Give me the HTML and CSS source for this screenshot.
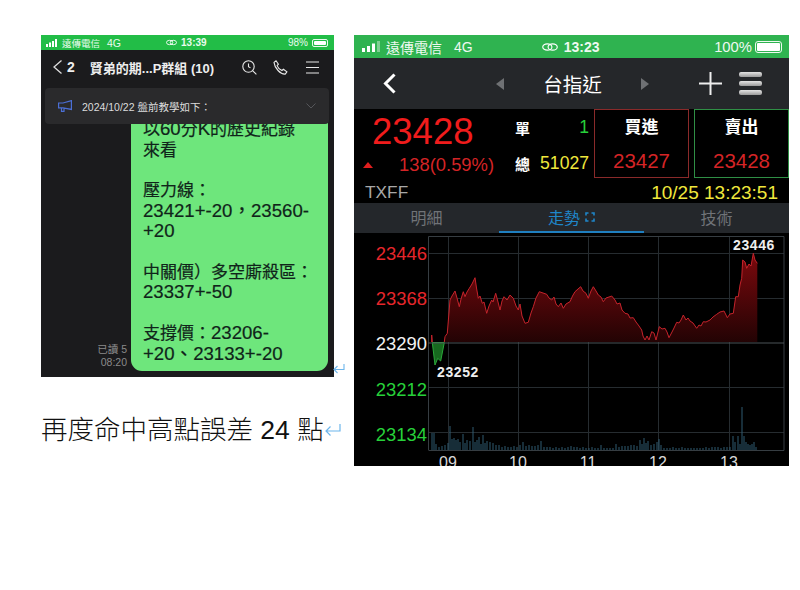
FILE: index.html
```html
<!DOCTYPE html>
<html lang="zh-Hant">
<head>
  <meta charset="UTF-8">
  <meta name="viewport" content="width=device-width, initial-scale=1.0">
  <title>再度命中高點</title>
  <link rel="stylesheet" href="styles.css">
</head>
<body>
  <div class="left-col">
    <div class="shot-row">
      <div class="chat">
        <div class="chat-status">
          <svg class="chat-signal" width="13" height="8" viewBox="0 0 13 8"><path fill="#fff" d="M0 5h2v3H0zM3 3.5h2V8H3zM6 2h2v6H6zM9 0h2v8H9z"/></svg>
          <span class="chat-carrier">遠傳電信</span>
          <span class="chat-net">4G</span>
          <svg class="chat-link" width="11" height="7" viewBox="0 0 15 9"><g fill="none" stroke="#fff" stroke-width="1.2"><ellipse cx="5" cy="4.5" rx="4.3" ry="3"/><ellipse cx="10" cy="4.5" rx="4.3" ry="3"/></g></svg>
          <span class="chat-time">13:39</span>
          <span class="chat-pct">98%</span>
          <span class="chat-batt"><span class="chat-batt-fill"></span></span>
        </div>
        <div class="chat-nav">
          <svg class="chat-back" width="9" height="14" viewBox="0 0 9 14"><path fill="none" stroke="#ddd" stroke-width="1.3" d="M8.5.5 1 7l7.5 6.5"/></svg>
          <span class="chat-count">2</span>
          <span class="chat-title">賢弟的期...P群組 (10)</span>
          <svg class="chat-ico-search" width="15" height="15" viewBox="0 0 15 15"><g fill="none" stroke="#e8e8e8" stroke-width="1.1"><circle cx="6.5" cy="6.5" r="5.7"/><path d="m10.8 10.8 3.6 3.6M6.5 3.5v3.2l2 1.2"/></g></svg>
          <svg class="chat-ico-phone" width="15" height="15" viewBox="0 0 15 15"><path fill="none" stroke="#e8e8e8" stroke-width="1.1" d="M1 2.4 3 .8l2.4 3.4-1.3 1.4c.7 2 2.6 4 4.8 4.9l1.5-1.2 3.5 2.6-1.7 2.2C7.500 14.500 1.500 8 1 2.400z"/></svg>
          <svg class="chat-ico-menu" width="13" height="13" viewBox="0 0 13 13"><path stroke="#e8e8e8" stroke-width="1.1" d="M0 1h13M0 6.500h13M0 12h13"/></svg>
        </div>
        <div class="chat-body">
          <div class="banner">
            <svg class="banner-ico" width="14" height="12" viewBox="0 0 14 12"><path fill="none" stroke="#4b6fd6" stroke-width="1.2" d="M13.400.6v8.800L5 7.800H.6V3H5zM3.500 8v3.400h2.500V8.200"/></svg>
            <span class="banner-text">2024/10/22 盤前教學如下：</span>
            <svg class="banner-arrow" width="10" height="6" viewBox="0 0 10 6"><path fill="none" stroke="#55565a" d="m.5.5 4.500 4.500L9.500.5"/></svg>
          </div>
          <div class="read">已讀 5<br>08:20</div>
          <div class="bubble"><span class="zh">以</span>60<span class="zh">分</span>K<span class="zh">的歷史紀錄</span><br><span class="zh">來看</span><br><br><span class="zh">壓力線：</span><br>23421+-20，23560-<br>+20<br><br><span class="zh">中關價）多空廝殺區：</span><br>23337+-50<br><br><span class="zh">支撐價：</span>23206-<br>+20、23133+-20</div>
        </div>
      </div>
      <svg class="para-mark" width="12" height="10" viewBox="0 0 12 10"><path fill="none" stroke="#6db6ec" stroke-width="1.1" d="M11 0v5.500H1M4.500 2 1 5.500 4.500 9"/></svg>
    </div>
    <p class="caption">再度命中高點誤差 24 點<svg class="caption-mark" width="16" height="14" viewBox="0 0 16 14"><path fill="none" stroke="#6db6ec" stroke-width="1.2" d="M15 1v7H1M5.500 3.500 1 8l4.500 4.500"/></svg></p>
  </div>

  <div class="quote">
    <div class="status">
      <svg class="signal" width="18" height="11" viewBox="0 0 18 11"><path fill="#fff" d="M0 7h3v4H0zM5 5h3v6H5zM10 2.500h3V11h-3z"/><path fill="#7fcf92" d="M15 0h3v11h-3z"/></svg>
      <span class="carrier">遠傳電信</span>
      <span class="net">4G</span>
      <svg class="link" width="16" height="10" viewBox="0 0 15 9"><g fill="none" stroke="#fff" stroke-width="1.100"><ellipse cx="5" cy="4.500" rx="4.300" ry="3"/><ellipse cx="10" cy="4.500" rx="4.300" ry="3"/></g></svg>
      <span class="time">13:23</span>
      <span class="pct">100%</span>
      <span class="batt"><span class="batt-fill"></span></span>
    </div>
    <div class="nav">
      <svg class="back" width="13" height="21" viewBox="0 0 13 21"><path fill="none" stroke="#fff" stroke-width="3" d="M11.500 1.500 2.500 10.500l9 9"/></svg>
      <div class="nav-center">
        <span class="tri tri-left"></span>
        <span class="nav-title">台指近</span>
        <span class="tri tri-right"></span>
      </div>
      <svg class="plus" width="23" height="23" viewBox="0 0 23 23"><path stroke="#eee" stroke-width="2" d="M0 11.500h23M11.500 0v23"/></svg>
      <div class="menu"><span></span><span></span><span></span></div>
    </div>
    <div class="prices">
      <div class="last">
        <div class="last-num">23428</div>
        <div class="last-chg"><span class="up"></span><span>138(0.59%)</span></div>
      </div>
      <div class="vol">
        <div class="vol-row"><b>單</b><span class="green">1</span></div>
        <div class="vol-row"><b>總</b><span class="yellow">51027</span></div>
      </div>
      <div class="box box-buy"><b>買進</b><span>23427</span></div>
      <div class="box box-sell"><b>賣出</b><span>23428</span></div>
    </div>
    <div class="code-row"><span class="code">TXFF</span><span class="stamp">10/25 13:23:51</span></div>
    <div class="tabs">
      <div class="tab">明細</div>
      <div class="tab tab-on">走勢
        <svg width="10" height="10" viewBox="0 0 10 10"><path fill="none" stroke="#1f86c9" stroke-width="1.600" d="M1 3.500V1h2.500M6.500 1H9v2.500M9 6.500V9H6.500M3.500 9H1V6.500"/></svg>
      </div>
      <div class="tab">技術</div>
    </div>
    <svg class="chart" width="435" height="233" viewBox="354 233 435 233">
      <defs>
        <linearGradient id="upFill" gradientUnits="userSpaceOnUse" x1="0" y1="253" x2="0" y2="343">
          <stop offset="0" stop-color="#7c090d"/>
          <stop offset="1" stop-color="#220304"/>
        </linearGradient>
      </defs>
      <path class="grid" d="M428 253.500h356M428 298.500h356M428 387.500h356M428 432.500h356M448.500 236v214M518.500 236v214M588.500 236v214M658.500 236v214M729.500 236v214"/>
      <path class="frame" d="M428.500 450V236.500h355.500V450.500H428.500"/>
      <path class="area" d="M431.700 342V335L432.300 342H444.300L445 336.700 447.300 333.300 450 300 452 296 455 291 457 298 459.300 306.700 461 299 463.300 291.700 465 296.700 467 292 469.300 288.300 472 284 475 277.700 476.500 288 478.300 298.300 480 296 482.300 303.300 484 302 486.700 313.300 489 306 491.700 300 493 302 495.700 293.300 497.500 300 500 310 502 301 504 296.700 507 300 510 295 513.300 298.300 516 306 518.300 310 520 304 522 316 525 323.300 528.300 322.300 531 313 533.300 306.700 536 298 539.300 291.700 543 293 546.700 294.300 549 298 551.700 300 554 297 556 304 558.300 306.700 561 303 563.300 308.300 566 304 570 301.700 572.500 296 575 291.700 578 289 580.700 286.700 583 291 586 293.300 588.300 298.300 591 291 593.300 286.700 596 291 598.300 295 601 297 603.300 301.700 606 298 609 297 611.700 296 615 300 617 304 620 303 622 310 625 313.300 628 314 630 318 633.300 317.700 636 322 639 326 641.700 330 643 336 645 340 647 336 649 340 651.700 331.700 654 333 656 340 658 332 659.300 326.700 662 329 665 328.300 667 332 669 337.700 672 332 674 328 676.700 322.300 679 323 681 320 683.300 315 686 320 688 318 690 321 693 323 696.700 328.300 699 325 701 326 703.300 321.700 706 322 710 320 713 317 716.700 314.300 720 312 724 311 725.500 314 727.300 317.700 730 314 733.300 313.300 735.700 296.700 738.300 296.700 740 285 741.700 278.300 742.700 260 745 262 746.700 268.300 749 264 751 266 753.300 253.300 755 260 757.300 263.300V342z"/>
      <path class="price" d="M431.700 342V335L432.300 342M444.300 342L445 336.700 447.300 333.300 450 300 452 296 455 291 457 298 459.300 306.700 461 299 463.300 291.700 465 296.700 467 292 469.300 288.300 472 284 475 277.700 476.500 288 478.300 298.300 480 296 482.300 303.300 484 302 486.700 313.300 489 306 491.700 300 493 302 495.700 293.300 497.500 300 500 310 502 301 504 296.700 507 300 510 295 513.300 298.300 516 306 518.300 310 520 304 522 316 525 323.300 528.300 322.300 531 313 533.300 306.700 536 298 539.300 291.700 543 293 546.700 294.300 549 298 551.700 300 554 297 556 304 558.300 306.700 561 303 563.300 308.300 566 304 570 301.700 572.500 296 575 291.700 578 289 580.700 286.700 583 291 586 293.300 588.300 298.300 591 291 593.300 286.700 596 291 598.300 295 601 297 603.300 301.700 606 298 609 297 611.700 296 615 300 617 304 620 303 622 310 625 313.300 628 314 630 318 633.300 317.700 636 322 639 326 641.700 330 643 336 645 340 647 336 649 340 651.700 331.700 654 333 656 340 658 332 659.300 326.700 662 329 665 328.300 667 332 669 337.700 672 332 674 328 676.700 322.300 679 323 681 320 683.300 315 686 320 688 318 690 321 693 323 696.700 328.300 699 325 701 326 703.300 321.700 706 322 710 320 713 317 716.700 314.300 720 312 724 311 725.500 314 727.300 317.700 730 314 733.300 313.300 735.700 296.700 738.300 296.700 740 285 741.700 278.300 742.700 260 745 262 746.700 268.300 749 264 751 266 753.300 253.300 755 260 757.300 263.300"/>
      <path class="dip" d="M432.300 342.500 435 365 437.700 358.300 440.700 361 444.300 342.500z"/>
      <path class="midline" d="M428 343h356"/>
      <path class="volume" d="M432 450v-17M434 450v-17M436 450v-6M439 450v-3M442 450v-4M445 450v-5M448 450v-7M450 450v-24M452 450v-11M454 450v-12M456 450v-10M458 450v-11M460 450v-8M463 450v-16M465 450v-7M467 450v-10M470 450v-9M473 450v-23M475 450v-8M477 450v-10M479 450v-13M481 450v-6M483 450v-15M485 450v-7M487 450v-9M490 450v-8M493 450v-7M496 450v-5M499 450v-5M502 450v-3M505 450v-4M508 450v-3M511 450v-3M514 450v-4M517 450v-3M520 450v-5M523 450v-8M526 450v-4M529 450v-5M532 450v-4M535 450v-4M538 450v-5M541 450v-9M544 450v-3M547 450v-3M550 450v-3M553 450v-2M556 450v-3M559 450v-2M562 450v-3M565 450v-2M568 450v-3M571 450v-4M574 450v-3M577 450v-3M580 450v-2M583 450v-3M586 450v-2M589 450v-2M592 450v-3M595 450v-2M598 450v-2M601 450v-5M604 450v-2M607 450v-2M610 450v-2M613 450v-2M616 450v-6M619 450v-3M622 450v-4M625 450v-4M628 450v-4M631 450v-5M634 450v-5M637 450v-4M640 450v-10M642 450v-6M644 450v-12M646 450v-7M648 450v-9M651 450v-5M654 450v-6M657 450v-8M659 450v-11M661 450v-5M664 450v-2M667 450v-2M670 450v-2M673 450v-3M676 450v-2M679 450v-2M682 450v-3M685 450v-2M688 450v-2M691 450v-2M694 450v-2M697 450v-2M700 450v-2M703 450v-2M706 450v-3M709 450v-2M712 450v-3M715 450v-3M718 450v-3M721 450v-2M724 450v-3M727 450v-3M730 450v-3M733 450v-14M735 450v-8M738 450v-14M740 450v-6M742 450v-43M744 450v-14M746 450v-8M748 450v-6M750 450v-5M752 450v-6M754 450v-8M756 450v-3"/>
      <text class="axis red" x="427" y="259.500">23446</text>
      <text class="axis red" x="427" y="304.500">23368</text>
      <text class="axis white" x="427" y="349.500">23290</text>
      <text class="axis green-axis" x="427" y="395.500">23212</text>
      <text class="axis green-axis" x="427" y="440.500">23134</text>
      <text class="mark" x="437" y="377">23252</text>
      <text class="mark" x="733" y="250">23446</text>
      <text class="hour" x="448" y="467.500">09</text>
      <text class="hour" x="518" y="467.500">10</text>
      <text class="hour" x="588" y="467.500">11</text>
      <text class="hour" x="658" y="467.500">12</text>
      <text class="hour" x="729" y="467.500">13</text>
    </svg>
  </div>
</body>
</html>
```

FILE: styles.css
```css
body {
  font-family: "Liberation Sans", "Noto Sans CJK TC", sans-serif;
  margin: 0;
  padding: 35px 0 0 41px;
  display: flex;
  align-items: flex-start;
  background: #fff;
}
svg {
  display: block;
  flex: none;
}

/* left column: chat screenshot and caption */
.left-col {
  width: 313px;
  flex: none;
}
.shot-row {
  display: flex;
  align-items: flex-end;
}
.chat {
  width: 293px;
  background: #1b1b1d;
  color: #fff;
}
.para-mark {
  margin: 0 0 3px -1px;
}
.chat-status {
  height: 15px;
  background: #22bd47;
  display: flex;
  align-items: center;
  padding: 0 6px 0 5px;
  font-size: 9.5px;
  color: #e9fbee;
}
.chat-carrier {
  margin-left: 3px;
}
.chat-net {
  margin-left: 7px;
  font-size: 10.500px;
}
.chat-link {
  margin-left: 45px;
}
.chat-time {
  margin-left: 4px;
  font-weight: bold;
  font-size: 10px;
}
.chat-pct {
  margin-left: auto;
  font-size: 10px;
}
.chat-batt {
  width: 16px;
  height: 8px;
  margin-left: 4px;
  border: 1px solid #e9fbee;
  border-radius: 2px;
  box-sizing: border-box;
  padding: 1px;
  display: flex;
}
.chat-batt-fill {
  flex: 1;
  background: #fff;
  border-radius: 1px;
}
.chat-nav {
  height: 38px;
  display: flex;
  align-items: center;
  padding: 0 15px 4px 12px;
  box-sizing: border-box;
  color: #eee;
}
.chat-count {
  font-size: 14px;
  font-weight: bold;
  margin-left: 5px;
}
.chat-title {
  font-size: 13px;
  font-weight: bold;
  margin-left: 15px;
  width: 136px;
  white-space: nowrap;
}
.chat-ico-search {
  margin-left: 16px;
}
.chat-ico-phone {
  margin-left: 16px;
}
.chat-ico-menu {
  margin-left: 18px;
}
.chat-body {
  position: relative;
  height: 289px;
  overflow: hidden;
  display: flex;
  justify-content: flex-end;
  align-items: flex-end;
  padding: 0 6px 6px 0;
  box-sizing: border-box;
}
.banner {
  position: absolute;
  left: 4px;
  top: 0;
  width: 284px;
  height: 36px;
  background: #2a2a2c;
  border-radius: 4px;
  display: flex;
  align-items: center;
  padding: 0 13px;
  box-sizing: border-box;
  z-index: 1;
  font-size: 10.5px;
  color: #dcdcdc;
}
.banner-text {
  margin-left: 10px;
}
.banner-arrow {
  margin-left: auto;
}
.read {
  font-size: 10.5px;
  line-height: 12.500px;
  color: #8a8a8a;
  text-align: right;
  margin: 0 4px 3px 0;
}
.bubble {
  width: 197px;
  flex: none;
  box-sizing: border-box;
  background: #6ee67c;
  border-radius: 0 0 11px 11px;
  padding: 0 5px 7px 12px;
  font-size: 18.600px;
  line-height: 20.400px;
  color: #10241a;
  white-space: nowrap;
  -webkit-text-stroke: 0.2px #10241a;
}
.bubble .zh {
  font-size: 17px;
  line-height: 1;
}
.caption {
  margin: 36px 0 0;
  font-size: 26.500px;
  line-height: 34px;
  font-weight: 300;
  color: #111;
  display: flex;
  align-items: center;
  white-space: pre;
}
.caption-mark {
  margin-left: 1px;
}

/* right column: quote screen */
.quote {
  width: 435px;
  height: 431px;
  flex: none;
  background: #000;
  color: #fff;
  overflow: hidden;
}
.status {
  height: 23px;
  background: #2fb350;
  display: flex;
  align-items: center;
  padding: 0 7px 0 8px;
  font-size: 14px;
  color: #eef9f0;
}
.carrier {
  margin-left: 6px;
}
.net {
  margin-left: 12px;
}
.link {
  margin-left: 69px;
}
.time {
  margin-left: 6px;
  font-weight: bold;
}
.pct {
  margin-left: auto;
  font-size: 14.800px;
}
.batt {
  width: 27px;
  height: 12px;
  margin-left: 3px;
  border: 1px solid #eef9f0;
  border-radius: 3px;
  box-sizing: border-box;
  padding: 1px;
  display: flex;
}
.batt-fill {
  flex: 1;
  background: #fff;
  border-radius: 1px;
}
.nav {
  height: 51px;
  background: #25272a;
  display: flex;
  align-items: center;
  padding-left: 29px;
}
.back {
  margin-right: 100px;
}
.nav-center {
  width: 153px;
  display: flex;
  align-items: center;
  justify-content: space-between;
}
.nav-title {
  font-size: 19.500px;
}
.tri {
  width: 0;
  height: 0;
  border-top: 6.500px solid transparent;
  border-bottom: 6.500px solid transparent;
}
.tri-left {
  border-right: 8px solid #6f7174;
}
.tri-right {
  border-left: 8px solid #6f7174;
}
.plus {
  margin-left: 50px;
}
.menu {
  margin-left: 17px;
  width: 23px;
  display: flex;
  flex-direction: column;
  gap: 4px;
}
.menu span {
  height: 5px;
  border-radius: 2px;
  background: linear-gradient(#e4e4e4, #9a9a9a);
}
.prices {
  height: 69px;
  display: flex;
}
.last {
  width: 147px;
  flex: none;
}
.last-num {
  font-size: 36.500px;
  line-height: 42px;
  color: #f01c1c;
  margin: 2px 0 0 18px;
}
.last-chg {
  display: flex;
  align-items: center;
  font-size: 18.400px;
  color: #d42426;
  margin-left: 9px;
  padding-top: 1px;
}
.up {
  width: 0;
  height: 0;
  border-left: 5px solid transparent;
  border-right: 5px solid transparent;
  border-bottom: 6px solid #e01f1f;
  margin-right: 26px;
}
.vol {
  width: 93px;
  flex: none;
  padding: 0 5px 0 14px;
  box-sizing: border-box;
}
.vol-row {
  display: flex;
  justify-content: space-between;
  align-items: center;
  height: 36px;
  font-size: 17.600px;
}
.vol-row b {
  font-size: 15px;
}
.green {
  color: #27d13a;
}
.yellow {
  color: #f0e83c;
}
.box {
  width: 95px;
  flex: none;
  box-sizing: border-box;
  display: flex;
  flex-direction: column;
  align-items: center;
  padding-top: 8px;
  gap: 11px;
}
.box b {
  font-size: 17px;
  line-height: 20px;
}
.box span {
  font-size: 20.500px;
  line-height: 24px;
  color: #d42426;
}
.box-buy {
  border: 1px solid #8a2a2a;
}
.box-sell {
  border: 1px solid #2f8f45;
  margin-left: 5px;
}
.code-row {
  height: 25px;
  display: flex;
  justify-content: space-between;
  align-items: center;
  padding: 4px 11px 0;
  box-sizing: border-box;
}
.code {
  font-size: 17.300px;
  color: #a8a8a8;
}
.stamp {
  font-size: 19px;
  color: #f0e83c;
}
.tabs {
  height: 30px;
  background: #24272b;
  display: flex;
}
.tab {
  flex: 1;
  display: flex;
  align-items: center;
  justify-content: center;
  gap: 5px;
  font-size: 16px;
  color: #707378;
  box-sizing: border-box;
  border-bottom: 2px solid transparent;
}
.tab-on {
  color: #1f86c9;
  border-bottom-color: #1f7fc0;
}

/* trend chart */
.chart {
  background: #000;
}
.chart .grid {
  fill: none;
  stroke: #262c30;
}
.chart .frame {
  fill: none;
  stroke: #363d42;
}
.chart .midline {
  fill: none;
  stroke: #4b5256;
}
.chart .area {
  fill: url(#upFill);
}
.chart .price {
  fill: none;
  stroke: #c5232b;
}
.chart .dip {
  fill: #17691f;
  stroke: #2aa83a;
}
.chart .volume {
  fill: none;
  stroke: #2f5a70;
}
.axis {
  font-size: 18.400px;
  text-anchor: end;
}
.axis.red {
  fill: #e6262b;
}
.axis.white {
  fill: #f2f2f2;
}
.axis.green-axis {
  fill: #27d13a;
}
.mark {
  font-size: 14px;
  font-weight: bold;
  letter-spacing: 0.600px;
  fill: #eee;
}
.hour {
  font-size: 16px;
  text-anchor: middle;
  fill: #d8d8d8;
}
```
